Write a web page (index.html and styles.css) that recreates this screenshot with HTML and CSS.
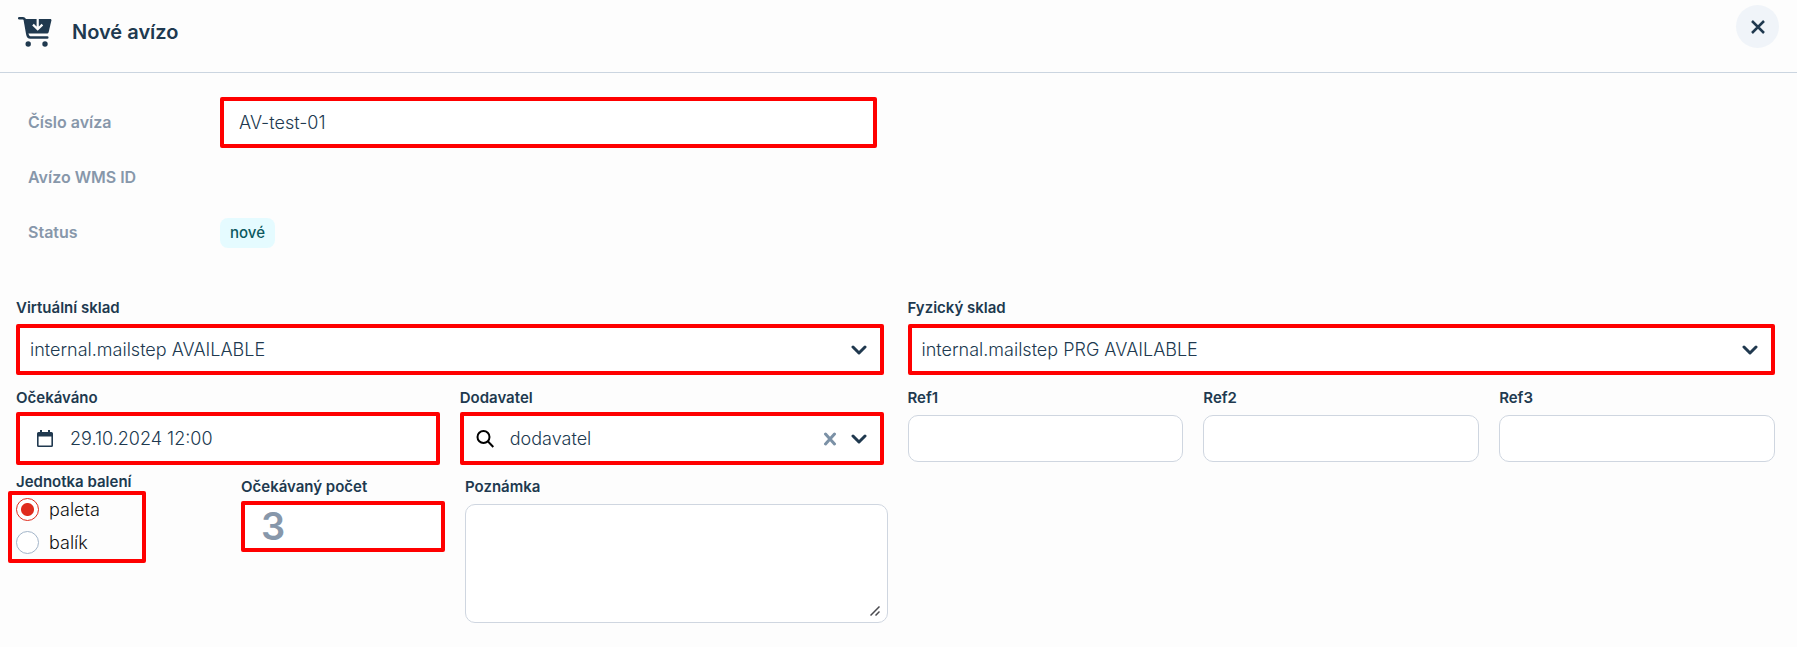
FILE: index.html
```html
<!DOCTYPE html>
<html lang="cs">
<head>
    <meta charset="UTF-8">
    <meta name="viewport" content="width=device-width, initial-scale=1.0">
    <title>Nové avízo</title>
    <link rel="stylesheet" href="styles.css">
</head>
<body>
    <header class="header">
        <svg class="cart-icon" viewBox="0 0 34 30" aria-hidden="true">
            <path d="M1.200 1.300h3.600c1.200 0 1.800.5 2 1.600L9.300 17c.4 2.300 1.300 3.500 3 3.500h17" fill="none" stroke="currentColor" stroke-width="2.500" stroke-linecap="round"/>
            <path d="M6 2h26.200c.9 0 1.400.7 1.200 1.600l-2.700 11.300c-.3 1.100-1 1.700-2.100 1.700H9z" fill="currentColor"/>
            <path d="M19.700 1v11.500M15 7.600l4.700 4.700 4.700-4.700" fill="none" stroke="#fdfdfd" stroke-width="2.200"/>
            <circle cx="10.200" cy="27" r="2.700" fill="currentColor"/>
            <circle cx="27" cy="27" r="2.700" fill="currentColor"/>
        </svg>
        <h1 class="title">Nové avízo</h1>
        <button class="close-btn" type="button" aria-label="Zavřít">
            <svg viewBox="0 0 14 14"><path d="M1 1l12 12M13 1L1 13"/></svg>
        </button>
    </header>

    <form class="form">
        <div class="summary">
            <label class="summary-label" for="number">Číslo avíza</label>
            <input class="control highlight number-input" id="number" type="text" value="AV-test-01">
            <span></span>
            <span class="summary-label">Avízo WMS ID</span>
            <span></span>
            <span></span>
            <span class="summary-label">Status</span>
            <span class="badge">nové</span>
        </div>

        <div class="row halves">
            <div class="field">
                <label for="virtual">Virtuální sklad</label>
                <div class="control highlight">
                    <select id="virtual">
                        <option>internal.mailstep AVAILABLE</option>
                    </select>
                    <svg class="chevron" viewBox="0 0 16 10"><path d="M2 2l6 6 6-6"/></svg>
                </div>
            </div>
            <div class="field">
                <label for="physical">Fyzický sklad</label>
                <div class="control highlight">
                    <select id="physical">
                        <option>internal.mailstep PRG AVAILABLE</option>
                    </select>
                    <svg class="chevron" viewBox="0 0 16 10"><path d="M2 2l6 6 6-6"/></svg>
                </div>
            </div>
        </div>

        <div class="row halves">
            <div class="row pair">
                <div class="field">
                    <label for="expected">Očekáváno</label>
                    <div class="control highlight with-icon">
                        <svg class="icon" viewBox="0 0 18 18"><path d="M4 0h2v2h6V0h2v2h1.500A1.500 1.500 0 0 1 17 3.500v12a1.500 1.500 0 0 1-1.500 1.500h-13A1.500 1.500 0 0 1 1 15.500v-12A1.500 1.500 0 0 1 2.500 2H4zM2.600 6.500v8.900h12.800V6.500z" fill="currentColor" fill-rule="evenodd"/></svg>
                        <input id="expected" type="text" value="29.10.2024 12:00">
                    </div>
                </div>
                <div class="field">
                    <label for="supplier">Dodavatel</label>
                    <div class="control highlight with-icon supplier">
                        <svg class="icon search" viewBox="0 0 18 18"><circle cx="7.500" cy="7" r="6"/><path d="M11.800 11.300l5.500 5.700"/></svg>
                        <input id="supplier" type="text" value="dodavatel">
                        <button class="clear-btn" type="button" aria-label="Vymazat">
                            <svg viewBox="0 0 14 14"><path d="M2.500 2l9 10M11.500 2l-9 10"/></svg>
                        </button>
                        <svg class="chevron" viewBox="0 0 16 10"><path d="M2 2l6 6 6-6"/></svg>
                    </div>
                </div>
            </div>
            <div class="row refs">
                <div class="field">
                    <label for="ref1">Ref1</label>
                    <input class="control" id="ref1" type="text">
                </div>
                <div class="field">
                    <label for="ref2">Ref2</label>
                    <input class="control" id="ref2" type="text">
                </div>
                <div class="field">
                    <label for="ref3">Ref3</label>
                    <input class="control" id="ref3" type="text">
                </div>
            </div>
        </div>

        <div class="row details">
            <fieldset class="units">
                <legend>Jednotka balení</legend>
                <div class="radio-group">
                    <label><input type="radio" name="unit" value="paleta" checked>paleta</label>
                    <label><input type="radio" name="unit" value="balik">balík</label>
                </div>
            </fieldset>
            <div class="field">
                <label for="count">Očekávaný počet</label>
                <input class="control highlight count-input" id="count" type="text" inputmode="numeric" value="3">
            </div>
            <div class="field">
                <label for="note">Poznámka</label>
                <div class="note-wrap">
                    <textarea class="note" id="note"></textarea>
                    <svg class="grip" viewBox="0 0 10 10"><path d="M.5 9.500l9-9M5.500 9.500l4-4"/></svg>
                </div>
            </div>
        </div>
    </form>
</body>
</html>
```

FILE: styles.css
```css
* {
    box-sizing: border-box;
}
body {
    margin: 0;
    font-family: Inter, sans-serif;
    font-size: 18px;
    font-weight: 300;
    color: #20394f;
    background-color: #fdfdfd;
}
input, select, textarea, button {
    font: inherit;
    color: inherit;
}
svg {
    display: block;
    flex: none;
}
.header {
    display: flex;
    align-items: flex-start;
    height: 73px;
    padding: 5px 18px 0;
    border-bottom: 1px solid #cbd5e0;
}
.cart-icon {
    width: 34px;
    height: 30px;
    margin-top: 12px;
}
.title {
    margin: 15px auto 0 20px;
    font-size: 20px;
    line-height: 24px;
    font-weight: 600;
}
.close-btn {
    display: flex;
    align-items: center;
    justify-content: center;
    width: 43px;
    height: 43px;
    padding: 0;
    border: none;
    border-radius: 50%;
    background-color: #f0f4f9;
    cursor: pointer;
}
.close-btn svg {
    width: 14px;
    height: 14px;
    fill: none;
    stroke: currentColor;
    stroke-width: 2.5;
}
.form {
    padding: 24px 22px 24px 16px;
}
.summary {
    display: grid;
    grid-template-columns: 192px 657fr 898fr;
    grid-template-rows: 51px 51px 51px;
    row-gap: 4px;
    align-items: center;
    padding-left: 12px;
}
.summary-label {
    padding-bottom: 2px;
    font-size: 16px;
    line-height: 20px;
    font-weight: 600;
    color: #8797aa;
}
.badge {
    justify-self: start;
    padding: 0 10px;
    border-radius: 8px;
    font-size: 15px;
    line-height: 30px;
    font-weight: 500;
    color: #0b5960;
    background-color: #e5fbff;
}
.row {
    display: grid;
    column-gap: 20px;
}
.halves {
    grid-template-columns: 1fr 1fr;
    column-gap: 24px;
}
.pair {
    grid-template-columns: 1fr 1fr;
}
.refs {
    grid-template-columns: 1fr 1fr 1fr;
}
.summary + .row {
    margin: 40px 0 13px;
}
.field > label, .units legend {
    display: block;
    padding: 0;
    margin-bottom: 4px;
    font-size: 15px;
    line-height: 20px;
    font-weight: 600;
}
.control {
    display: flex;
    align-items: center;
    width: 100%;
    height: 47px;
    padding: 0 16px;
    border: 1px solid #cfd6e0;
    border-radius: 10px;
    background-color: #fff;
}
.refs .control {
    margin-top: 7px;
}
.highlight {
    height: 51px;
    padding: 0 13px 0 10px;
    border: 4px solid #f00;
    border-radius: 2px;
}
.summary + .row .highlight {
    margin-top: 6px;
}
.number-input {
    padding-left: 15px;
}
.control select, .control input {
    flex: 1;
    min-width: 0;
    padding: 0;
    border: none;
    outline: none;
    background: none;
    appearance: none;
}
.with-icon {
    height: 53px;
    padding-left: 16px;
}
.supplier {
    padding-left: 12px;
}
.icon {
    width: 18px;
    height: 18px;
    margin-right: 16px;
}
.search {
    fill: none;
    stroke: #000;
    stroke-width: 2;
}
.chevron {
    width: 16px;
    height: 10px;
    fill: none;
    stroke: currentColor;
    stroke-width: 3;
    stroke-linecap: round;
    stroke-linejoin: round;
}
.clear-btn {
    padding: 0;
    margin-right: 14px;
    border: none;
    background: none;
    cursor: pointer;
}
.clear-btn svg {
    width: 14px;
    height: 14px;
    fill: none;
    stroke: #7b91a6;
    stroke-width: 3;
    stroke-linecap: round;
}
.details {
    grid-template-columns: 205fr 204fr 423fr 867fr;
    margin-top: 8px;
}
.units {
    min-width: 0;
    margin: 0;
    padding: 0;
    border: none;
}
.units legend {
    margin-bottom: 0;
    line-height: 18px;
}
.radio-group {
    display: flex;
    flex-direction: column;
    gap: 10px;
    width: 138px;
    margin-left: -8px;
    padding: 3px 4px 5px;
    border: 4px solid #f00;
    border-radius: 2px;
}
.radio-group label {
    display: flex;
    align-items: center;
    gap: 10px;
    line-height: 23px;
    color: #111;
}
.radio-group input {
    width: 23px;
    height: 23px;
    margin: 0;
    border: 1px solid #a3b5c9;
    border-radius: 50%;
    background-color: #fff;
    appearance: none;
}
.radio-group input:checked {
    border-color: #e02b1d;
    background: radial-gradient(circle, #e02b1d 6px, #fff 7px);
}
.details .field {
    padding-top: 4px;
}
.count-input {
    padding: 0 0 2px 16px;
    font-size: 38px;
    font-weight: 600;
    color: #8797aa;
}
.note-wrap {
    position: relative;
    margin-top: 7px;
}
.note {
    display: block;
    width: 100%;
    height: 119px;
    padding: 10px 16px;
    border: 1px solid #cfd6e0;
    border-radius: 10px;
    background-color: #fff;
    resize: none;
}
.grip {
    position: absolute;
    right: 8px;
    bottom: 7px;
    width: 10px;
    height: 10px;
    fill: none;
    stroke: #4a4a4f;
    stroke-width: 1.5;
    pointer-events: none;
}
```
